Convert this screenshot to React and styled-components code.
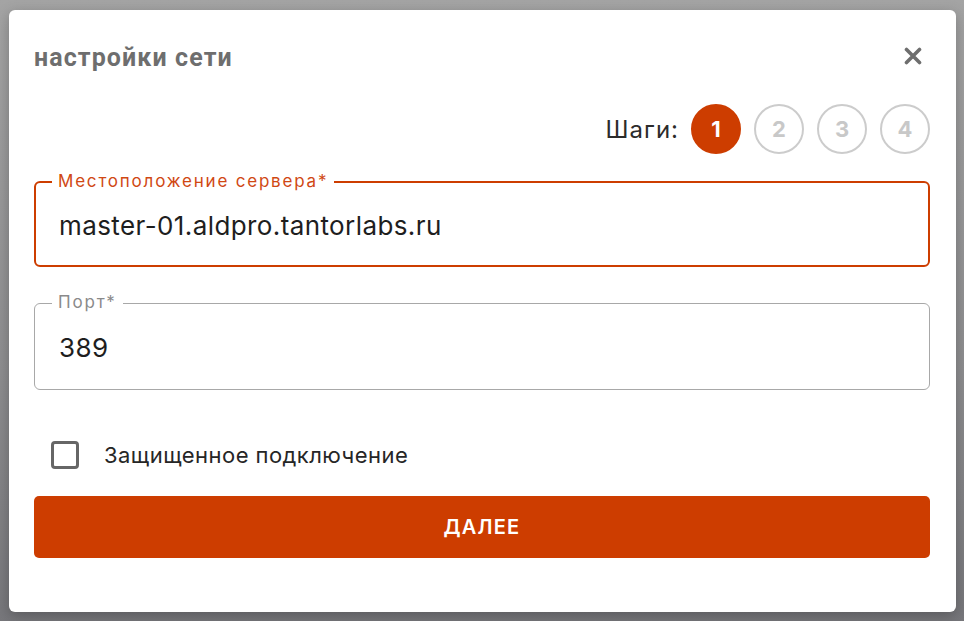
import styled, { createGlobalStyle } from "styled-components";

const GlobalStyle = createGlobalStyle`
  html, body {
    margin: 0;
    padding: 0;
    height: 100%;
  }
  body {
    background: linear-gradient(180deg, #a4a4a4 0%, #8e8e90 60%, #77777b 100%);
    font-family: Inter, "Noto Sans", sans-serif;
  }
`;

const Page = styled.div`
  width: 964px;
  height: 621px;
  padding: 10px 8px 9px 9px;
  box-sizing: border-box;
`;

const Dialog = styled.div`
  width: 947px;
  height: 602px;
  box-sizing: border-box;
  background: #fff;
  border-radius: 6px;
  box-shadow: 0 4px 14px rgba(0, 0, 0, 0.25);
  padding: 0 26px 0 25px;
  display: flex;
  flex-direction: column;
`;

const Header = styled.div`
  display: flex;
  align-items: center;
  justify-content: space-between;
  height: 94px;
`;

const Title = styled.h2`
  margin: 0;
  font-family: Roboto, sans-serif;
  font-weight: 700;
  font-size: 25px;
  color: #6e6e6e;
  letter-spacing: 1.1px;
`;

const CloseButton = styled.button`
  border: 0;
  background: none;
  padding: 0;
  width: 24px;
  height: 24px;
  margin-right: 5px;
  margin-top: -2px;
  cursor: pointer;
  display: flex;
  align-items: center;
  justify-content: center;
`;

const Steps = styled.div`
  display: flex;
  align-items: center;
  justify-content: flex-end;
  gap: 13px;
  height: 50px;
`;

const StepsLabel = styled.span`
  font-size: 24px;
  letter-spacing: 1px;
  color: #2b2b2b;
  margin-right: -1px;
`;

const Step = styled.div`
  width: 50px;
  height: 50px;
  box-sizing: border-box;
  border-radius: 50%;
  display: flex;
  align-items: center;
  justify-content: center;
  font-size: 22px;
  font-weight: 700;
  border: 2.5px solid ${(p) => (p.$active ? "#cd3d00" : "#cccccc")};
  background: ${(p) => (p.$active ? "#cd3d00" : "#fff")};
  color: ${(p) => (p.$active ? "#fff" : "#c8c8c8")};
`;

const Field = styled.div`
  position: relative;
  height: ${(p) => p.$h}px;
  box-sizing: border-box;
  border: ${(p) => (p.$focused ? "2px solid #cd3d00" : "1px solid #a8a8a8")};
  border-radius: 6px;
  display: flex;
  align-items: center;
  padding-left: ${(p) => (p.$focused ? 23 : 24)}px;
  padding-top: 2px;
  margin-top: ${(p) => p.$mt}px;
`;

const FloatLabel = styled.span`
  position: absolute;
  left: ${(p) => (p.$focused ? 16 : 17)}px;
  top: -11px;
  padding: 0 6px;
  background: #fff;
  font-size: 17px;
  letter-spacing: 1.8px;
  line-height: 18px;
  color: ${(p) => (p.$focused ? "#d04813" : "#8a8a8a")};
`;

const Value = styled.span`
  font-size: 26px;
  letter-spacing: 0.4px;
  color: #1e1e1e;
`;

const CheckRow = styled.label`
  display: flex;
  align-items: center;
  gap: 25px;
  margin-top: 51px;
  padding-left: 17px;
  height: 28px;
`;

const Box = styled.span`
  width: 28px;
  height: 28px;
  box-sizing: border-box;
  border: 3px solid #666;
  border-radius: 4px;
`;

const CheckText = styled.span`
  font-size: 22px;
  letter-spacing: 0.45px;
  color: #262626;
`;

const PrimaryButton = styled.button`
  margin-top: 27px;
  height: 62px;
  border: 0;
  border-radius: 5px;
  background: #cd3d00;
  color: #fff;
  font-family: Inter, sans-serif;
  font-weight: 600;
  font-size: 20px;
  letter-spacing: 1.2px;
  text-transform: uppercase;
  cursor: pointer;
`;

export default function App() {
  return (
    <>
      <GlobalStyle />
      <Page>
        <Dialog>
          <Header>
            <Title>настройки сети</Title>
            <CloseButton aria-label="close">
              <svg width="18" height="18" viewBox="0 0 18 18">
                <path d="M2.5 2.5 L15.5 15.5 M15.5 2.5 L2.5 15.5" stroke="#6e6e6e" strokeWidth="3.6" strokeLinecap="round" />
              </svg>
            </CloseButton>
          </Header>
          <Steps>
            <StepsLabel>Шаги:</StepsLabel>
            {[1, 2, 3, 4].map((n) => (
              <Step key={n} $active={n === 1}>{n}</Step>
            ))}
          </Steps>
          <Field $focused $h={86} $mt={27}>
            <FloatLabel $focused>Местоположение сервера*</FloatLabel>
            <Value>master-01.aldpro.tantorlabs.ru</Value>
          </Field>
          <Field $h={87} $mt={36}>
            <FloatLabel>Порт*</FloatLabel>
            <Value>389</Value>
          </Field>
          <CheckRow>
            <Box />
            <CheckText>Защищенное подключение</CheckText>
          </CheckRow>
          <PrimaryButton>Далее</PrimaryButton>
        </Dialog>
      </Page>
    </>
  );
}
